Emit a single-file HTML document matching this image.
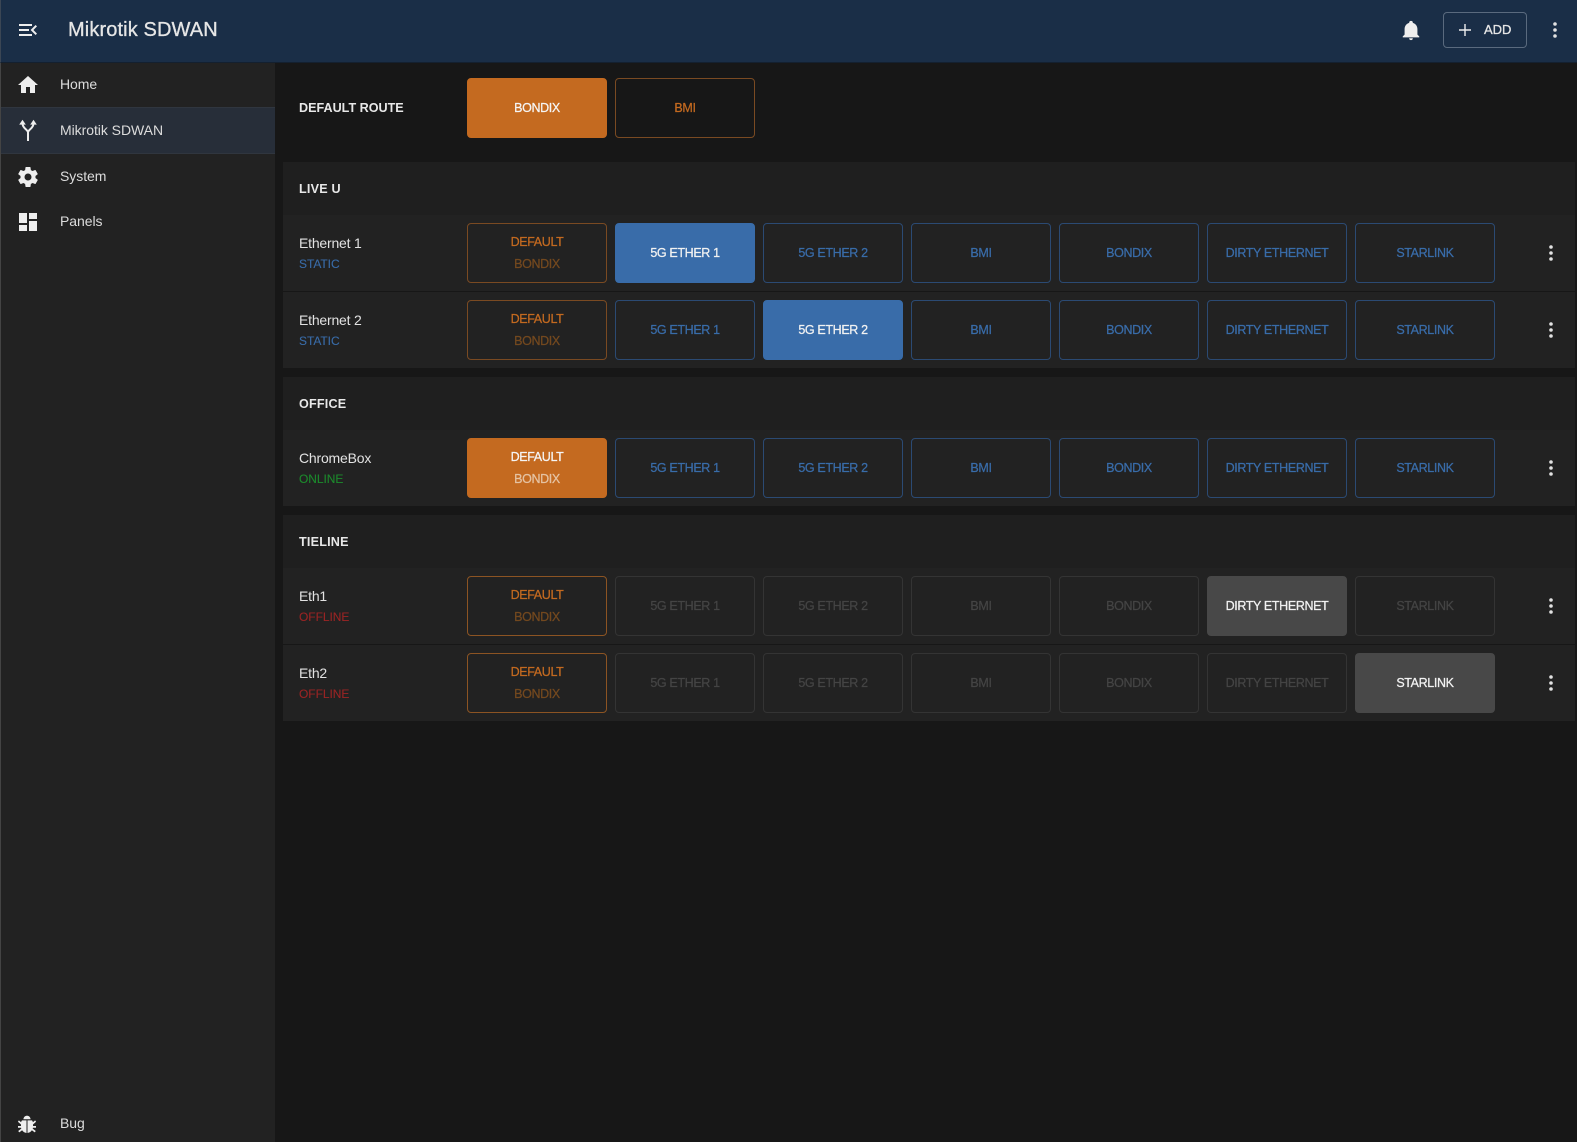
<!DOCTYPE html>
<html>
<head>
<meta charset="utf-8">
<title>Mikrotik SDWAN</title>
<style>
*{box-sizing:border-box}
html,body{margin:0;padding:0;width:1577px;height:1142px;overflow:hidden;background:#171717;font-family:"Liberation Sans",Arial,sans-serif;color:#e6e6e6}
.a{position:absolute}
svg{position:absolute;width:24px;height:24px;fill:#eee}
#hdr{left:0;top:0;width:1577px;height:63px;background:#1a2e47;border-bottom:1px solid #14202f;border-left:1px solid #3b4654}
#title{left:68px;top:18px;font-size:20px;line-height:24px;letter-spacing:.12px;-webkit-text-stroke:.3px #e6e6e6}
#add{left:1443px;top:12px;width:84px;height:36px;border:1px solid #5a6a7e;border-radius:4px}
#addt{left:1484px;top:22px;font-size:13px;line-height:16px;-webkit-text-stroke:.3px #e6e6e6}
#side{left:0;top:62px;width:275px;height:1080px;background:#222;border-left:1px solid #444}
.mi{position:absolute;left:60px;font-size:14px;line-height:18px;color:#dcdcdc;letter-spacing:-.05px}
#act{left:1px;top:107px;width:274px;height:47px;background:#272e39;border-top:1px solid #30363f;border-bottom:1px solid #30363f}
.sec{position:absolute;left:283px;width:1292px;background:#1f1f1f}
.row{position:absolute;left:0;width:1292px;height:76px;background:#222}
.div{position:absolute;left:0;width:1292px;height:1px;background:#171717}
.h{position:absolute;left:16px;top:19px;font-size:12.6px;font-weight:bold;letter-spacing:.2px;line-height:16px;color:#e8e8e8}
.n{position:absolute;left:16px;top:19px;font-size:14px;letter-spacing:-.2px;line-height:18px;color:#e2e2e2}
.s{position:absolute;left:16px;top:41px;font-size:12px;letter-spacing:-.05px;line-height:16px;-webkit-text-stroke:.1px currentColor}
.b{position:absolute;width:140px;height:60px;top:8px;border:1px solid;border-radius:4px;font-size:12.5px;letter-spacing:-.36px;line-height:16px;text-align:center;-webkit-text-stroke:.25px currentColor}
.b span{position:absolute;left:0;right:0;top:21px}
.b .d{top:10px}
.b .v{top:32px}
.bl{color:#396ca9;border-color:#2b4a73}
.bls{background:#396ca9;border-color:#396ca9;color:#f2f2f2}
.g{color:#444;border-color:#343434}
.gs{background:#484848;border-color:#484848;color:#f2f2f2}
.o{color:#c46a20;border-color:#7a4a22}
.o .v{color:#74491f}
.o2{border-color:#8c5423}
.os{background:#c46a20;border-color:#c46a20;color:#f5f5f5}
.os .v{color:#e5c3a3}
.c1{left:184px}.c2{left:332px}.c3{left:480px}.c4{left:628px}.c5{left:776px}.c6{left:924px}.c7{left:1072px}
.dots{left:1256px;top:26px;fill:#e2e2e2}
</style>
</head>
<body>
<svg width="0" height="0" style="position:absolute"><defs>
<path id="dv" d="M12,16.2A1.8,1.8 0 1,1 12,19.8A1.8,1.8 0 1,1 12,16.2M12,10.2A1.8,1.8 0 1,1 12,13.8A1.8,1.8 0 1,1 12,10.2M12,4.2A1.8,1.8 0 1,1 12,7.8A1.8,1.8 0 1,1 12,4.2Z"/>
</defs></svg>

<div class="a" id="side"></div>
<div class="a" id="act"></div>
<div class="a" id="hdr"></div>

<svg viewBox="0 0 24 24" style="left:16px;top:18px"><path d="M21,15.61L19.59,17L14.58,12L19.59,7L21,8.39L17.44,12L21,15.61M3,6H16V8H3V6M3,13V11H13V13H3M3,18V16H16V18H3Z"/></svg>
<div class="a" id="title">Mikrotik SDWAN</div>
<svg viewBox="0 0 24 24" style="left:1400px;top:19px;width:22px;height:22px"><path d="M21,19V20H3V19L5,17V11C5,7.9 7.03,5.17 10,4.29C10,4.19 10,4.1 10,4A2,2 0 0,1 12,2A2,2 0 0,1 14,4C14,4.1 14,4.19 14,4.29C16.97,5.17 19,7.9 19,11V17L21,19M14,21A2,2 0 0,1 12,23A2,2 0 0,1 10,21"/></svg>
<div class="a" id="add"></div>
<svg viewBox="0 0 24 24" style="left:1453px;top:18px"><path d="M18,12.7H12.7V18H11.3V12.7H6V11.3H11.3V6H12.7V11.3H18V12.7Z"/></svg>
<div class="a" id="addt">ADD</div>
<svg viewBox="0 0 24 24" style="left:1543px;top:18px;fill:#e2e2e2"><use href="#dv"/></svg>

<svg viewBox="0 0 24 24" style="left:16px;top:73px"><path d="M10,20V14H14V20H19V12H22L12,3L2,12H5V20H10Z"/></svg>
<div class="mi" style="top:75px">Home</div>
<svg viewBox="0 0 24 24" style="left:16px;top:118px"><path d="M12,23V14.5C12,11.5 6.5,10.5 6.5,5.5M12,14.5C12,11.5 17.5,10.5 17.5,5.5" fill="none" stroke="#eee" stroke-width="2"/><path d="M6.5,1.8L3.2,6.6H9.8ZM17.5,1.8L14.2,6.6H20.8Z"/></svg>
<div class="mi" style="top:121px">Mikrotik SDWAN</div>
<svg viewBox="0 0 24 24" style="left:16px;top:165px"><path d="M12,15.5A3.5,3.5 0 0,1 8.5,12A3.5,3.5 0 0,1 12,8.5A3.5,3.5 0 0,1 15.5,12A3.5,3.5 0 0,1 12,15.5M19.43,12.97C19.47,12.65 19.5,12.33 19.5,12C19.5,11.67 19.47,11.34 19.43,11L21.54,9.37C21.73,9.22 21.78,8.95 21.66,8.73L19.66,5.27C19.54,5.05 19.27,4.96 19.05,5.05L16.56,6.05C16.04,5.66 15.5,5.32 14.87,5.07L14.5,2.42C14.46,2.18 14.25,2 14,2H10C9.75,2 9.54,2.18 9.5,2.42L9.13,5.07C8.5,5.32 7.96,5.66 7.44,6.05L4.95,5.05C4.73,4.96 4.46,5.05 4.34,5.27L2.34,8.73C2.21,8.95 2.27,9.22 2.46,9.37L4.57,11C4.53,11.34 4.5,11.67 4.5,12C4.5,12.33 4.53,12.65 4.57,12.97L2.46,14.63C2.27,14.78 2.21,15.05 2.34,15.27L4.34,18.73C4.46,18.95 4.73,19.03 4.95,18.95L7.44,17.94C7.96,18.34 8.5,18.68 9.13,18.93L9.5,21.58C9.54,21.82 9.75,22 10,22H14C14.25,22 14.46,21.82 14.5,21.58L14.87,18.93C15.5,18.67 16.04,18.34 16.56,17.94L19.05,18.95C19.27,19.03 19.54,18.95 19.66,18.73L21.66,15.27C21.78,15.05 21.73,14.78 21.54,14.63L19.43,12.97Z"/></svg>
<div class="mi" style="top:167px">System</div>
<svg viewBox="0 0 24 24" style="left:16px;top:210px"><path d="M13,3V9H21V3M13,21H21V11H13M3,21H11V15H3M3,13H11V3H3V13Z"/></svg>
<div class="mi" style="top:212px">Panels</div>
<svg viewBox="0 0 24 24" style="left:15px;top:1112px"><path d="M8.4,7.2C8.7,5 10.1,3.8 12,3.8C13.9,3.8 15.3,5 15.6,7.2ZM11.5,8.4H7C6.5,9 6.2,9.6 6.1,10.3L3.9,8.4L2.9,9.7L6,12.5V14H3V15.8H6.1L6.3,16.6L3.2,19L4.3,20.4L7.1,18.3C8.1,19.8 9.6,20.8 11.5,21ZM12.5,8.4V21C14.4,20.8 15.9,19.8 16.9,18.3L19.7,20.4L20.8,19L17.7,16.6L17.9,15.8H21V14H18V12.5L21.1,9.7L20.1,8.4L17.9,10.3C17.8,9.6 17.5,9 17,8.4Z"/></svg>
<div class="mi" style="top:1114px">Bug</div>

<!-- Default route -->
<div class="a" style="left:299px;top:100px;font-size:12.6px;font-weight:bold;line-height:16px;color:#e8e8e8">DEFAULT ROUTE</div>
<div class="b os" style="left:467px;top:78px"><span>BONDIX</span></div>
<div class="b o" style="left:615px;top:78px"><span>BMI</span></div>

<!-- LIVE U -->
<div class="sec" style="top:162px;height:206px">
  <div class="h">LIVE U</div>
  <div class="row" style="top:53px">
    <div class="n">Ethernet 1</div><div class="s" style="color:#396ca9">STATIC</div>
    <div class="b o c1"><span class="d">DEFAULT</span><span class="v">BONDIX</span></div>
    <div class="b bls c2"><span>5G ETHER 1</span></div>
    <div class="b bl c3"><span>5G ETHER 2</span></div>
    <div class="b bl c4"><span>BMI</span></div>
    <div class="b bl c5"><span>BONDIX</span></div>
    <div class="b bl c6"><span>DIRTY ETHERNET</span></div>
    <div class="b bl c7"><span>STARLINK</span></div>
    <svg class="dots" viewBox="0 0 24 24"><use href="#dv"/></svg>
  </div>
  <div class="div" style="top:129px"></div>
  <div class="row" style="top:130px">
    <div class="n">Ethernet 2</div><div class="s" style="color:#396ca9">STATIC</div>
    <div class="b o c1"><span class="d">DEFAULT</span><span class="v">BONDIX</span></div>
    <div class="b bl c2"><span>5G ETHER 1</span></div>
    <div class="b bls c3"><span>5G ETHER 2</span></div>
    <div class="b bl c4"><span>BMI</span></div>
    <div class="b bl c5"><span>BONDIX</span></div>
    <div class="b bl c6"><span>DIRTY ETHERNET</span></div>
    <div class="b bl c7"><span>STARLINK</span></div>
    <svg class="dots" viewBox="0 0 24 24"><use href="#dv"/></svg>
  </div>
</div>

<!-- OFFICE -->
<div class="sec" style="top:377px;height:129px">
  <div class="h">OFFICE</div>
  <div class="row" style="top:53px">
    <div class="n">ChromeBox</div><div class="s" style="color:#1c8a2c">ONLINE</div>
    <div class="b os c1"><span class="d">DEFAULT</span><span class="v">BONDIX</span></div>
    <div class="b bl c2"><span>5G ETHER 1</span></div>
    <div class="b bl c3"><span>5G ETHER 2</span></div>
    <div class="b bl c4"><span>BMI</span></div>
    <div class="b bl c5"><span>BONDIX</span></div>
    <div class="b bl c6"><span>DIRTY ETHERNET</span></div>
    <div class="b bl c7"><span>STARLINK</span></div>
    <svg class="dots" viewBox="0 0 24 24"><use href="#dv"/></svg>
  </div>
</div>

<!-- TIELINE -->
<div class="sec" style="top:515px;height:206px">
  <div class="h">TIELINE</div>
  <div class="row" style="top:53px">
    <div class="n">Eth1</div><div class="s" style="color:#9a2424">OFFLINE</div>
    <div class="b o o2 c1"><span class="d">DEFAULT</span><span class="v">BONDIX</span></div>
    <div class="b g c2"><span>5G ETHER 1</span></div>
    <div class="b g c3"><span>5G ETHER 2</span></div>
    <div class="b g c4"><span>BMI</span></div>
    <div class="b g c5"><span>BONDIX</span></div>
    <div class="b gs c6"><span>DIRTY ETHERNET</span></div>
    <div class="b g c7"><span>STARLINK</span></div>
    <svg class="dots" viewBox="0 0 24 24"><use href="#dv"/></svg>
  </div>
  <div class="div" style="top:129px"></div>
  <div class="row" style="top:130px">
    <div class="n">Eth2</div><div class="s" style="color:#9a2424">OFFLINE</div>
    <div class="b o o2 c1"><span class="d">DEFAULT</span><span class="v">BONDIX</span></div>
    <div class="b g c2"><span>5G ETHER 1</span></div>
    <div class="b g c3"><span>5G ETHER 2</span></div>
    <div class="b g c4"><span>BMI</span></div>
    <div class="b g c5"><span>BONDIX</span></div>
    <div class="b g c6"><span>DIRTY ETHERNET</span></div>
    <div class="b gs c7"><span>STARLINK</span></div>
    <svg class="dots" viewBox="0 0 24 24"><use href="#dv"/></svg>
  </div>
</div>
</body>
</html>
